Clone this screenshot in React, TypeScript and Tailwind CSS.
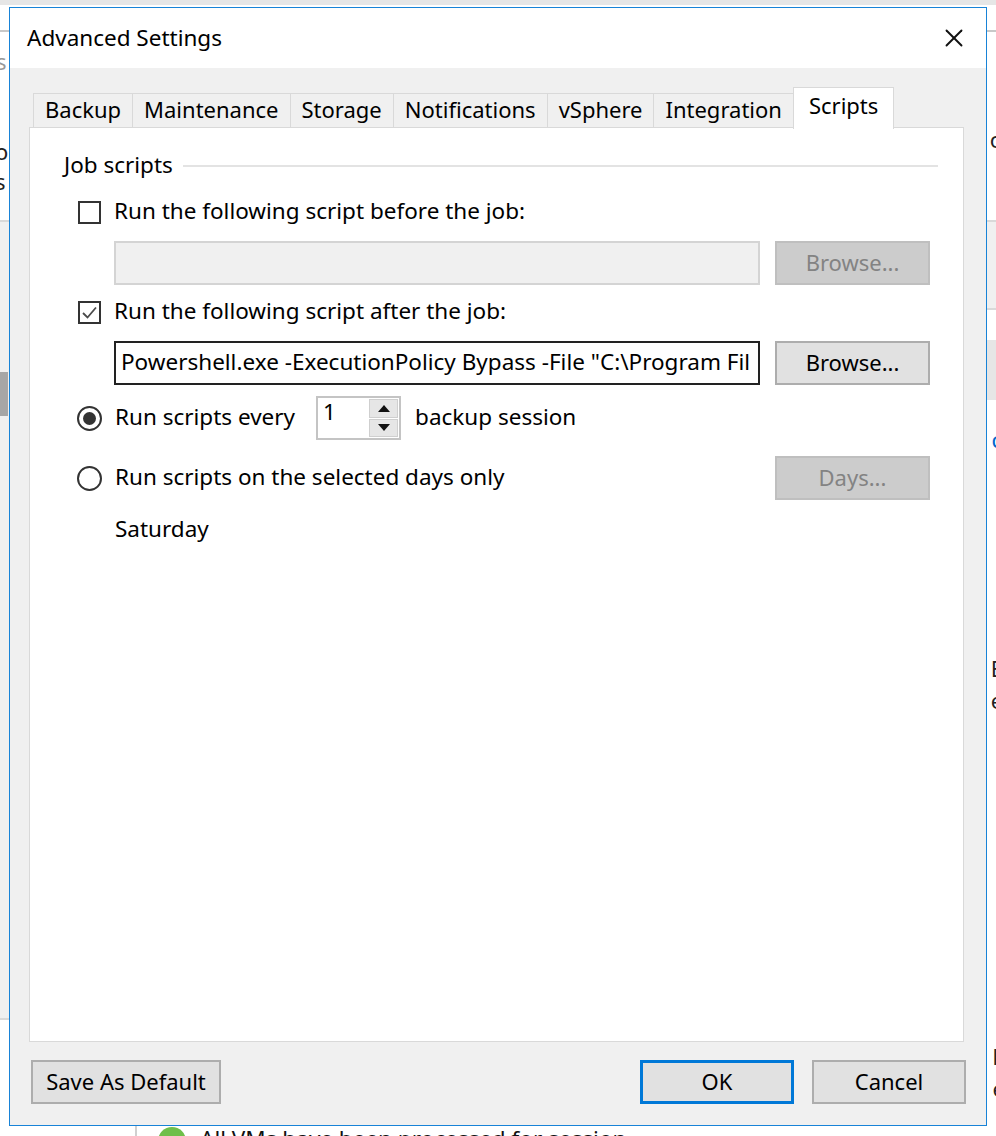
import { X } from "lucide-react";

const font = { fontFamily: '"Noto Sans", "Open Sans", sans-serif' };

const tabs = ["Backup", "Maintenance", "Storage", "Notifications", "vSphere", "Integration"];

function Checkbox({ checked }: { checked?: boolean }) {
  return (
    <div className="w-[23px] h-[23px] border-2 border-[#333333] bg-white flex items-center justify-center shrink-0">
      {checked && (
        <svg width="17" height="17" viewBox="0 0 17 17">
          <path d="M2 9 L6.5 13.5 L15 3.5" fill="none" stroke="#4a4a4a" strokeWidth="1.8" />
        </svg>
      )}
    </div>
  );
}

function Radio({ checked }: { checked?: boolean }) {
  return (
    <div className="w-[25px] h-[25px] rounded-full border-2 border-[#333333] bg-white flex items-center justify-center shrink-0">
      {checked && <div className="w-[13px] h-[13px] rounded-full bg-[#333333]" />}
    </div>
  );
}

function Button({ label, disabled, primary, w = "w-[155px]" }: { label: string; disabled?: boolean; primary?: boolean; w?: string }) {
  return (
    <div
      className={`${w} h-[44px] flex items-center justify-center text-[22px] leading-[28px] pb-[2px] shrink-0 ${
        disabled
          ? "bg-[#cccccc] border-2 border-[#bfbfbf] text-[#838383]"
          : primary
          ? "bg-[#e1e1e1] border-[3px] border-[#0078d7] text-black"
          : "bg-[#e1e1e1] border-2 border-[#adadad] text-black"
      }`}
    >
      {label}
    </div>
  );
}

export default function App() {
  return (
    <div className="relative w-[996px] h-[1136px] overflow-hidden bg-white" style={font}>
      {/* underlying window, mostly hidden */}
      <div className="absolute inset-x-0 top-0 h-[5px] bg-[#e6e6e6]" />
      <div className="absolute left-0 top-[30px] w-[10px] h-[2px] bg-[#c8c8c8]" />
      <div className="absolute right-0 top-[30px] w-[10px] h-[2px] bg-[#c8c8c8]" />
      <div className="absolute left-0 top-[220px] w-[10px] h-[800px] bg-[#f0f0f0] border-t-2 border-[#d9d9d9]" />
      <div className="absolute left-0 top-[372px] w-[8px] h-[44px] bg-[#a6a6a6]" />
      <div className="absolute left-0 top-[1018px] w-[10px] h-[2px] bg-[#d9d9d9]" />
      <div className="absolute right-0 top-[220px] w-[10px] h-[90px] bg-[#f0f0f0] border-y-2 border-[#d9d9d9]" />
      <div className="absolute right-0 top-[340px] w-[10px] h-[60px] bg-[#e6e6e6]" />
      <div className="absolute left-[-5px] top-[136px] text-[22px] leading-[30px] text-[#222]">o<br />s</div>
      <div className="absolute left-[-4px] top-[46px] text-[22px] leading-[30px] text-[#999]">s</div>
      <div className="absolute right-[-7px] top-[124px] text-[22px] leading-[30px] text-[#222]">o</div>
      <div className="absolute right-[-6px] top-[424px] text-[22px] leading-[30px] text-[#0066cc]">c</div>
      <div className="absolute right-[-9px] top-[652px] text-[22px] leading-[32px] text-[#222]">B<br />e</div>
      <div className="absolute right-[-9px] top-[1040px] text-[22px] leading-[32px] text-[#222]">k<br />e</div>
      <div className="absolute left-[135px] top-[1126px] w-[2px] h-[10px] bg-[#d0d0d0]" />
      <div className="absolute left-[158px] top-[1127px] w-[28px] h-[28px] rounded-full bg-[#6fbf4a]" />
      <div className="absolute left-[200px] top-[1125px] text-[22.5px] leading-[28px] text-[#111] whitespace-nowrap">
        All VMs have been processed for session
      </div>

      {/* dialog */}
      <div className="absolute left-[9px] top-[7px] w-[978px] h-[1119px] border border-[#1883d7] bg-[#f0f0f0] flex flex-col">
        <div className="h-[60px] bg-white flex items-center justify-between pl-[17px] pr-[17px] shrink-0">
          <span className="text-[22.5px] text-black">Advanced Settings</span>
          <X size={30} strokeWidth={1.5} color="#111" />
        </div>

        <div className="flex-1 flex flex-col pt-[18px] pl-[19px] pr-[22px] pb-[21px]">
          {/* tabs */}
          <div className="flex items-end h-[41px] pl-[4px] relative z-10">
            {tabs.map((t) => (
              <div
                key={t}
                className="h-[35px] -mb-px px-[11px] pb-[3px] border border-[#d9d9d9] -ml-px first:ml-0 flex items-center text-[22px] text-black bg-[#f0f0f0]"
              >
                {t}
              </div>
            ))}
            <div className="h-[42px] -mb-[2px] -ml-px px-[15px] border border-b-0 border-[#d9d9d9] bg-white flex items-start pt-[1px] text-[22px] text-black">
              Scripts
            </div>
          </div>

          {/* panel */}
          <div className="h-[915px] bg-white border border-[#d9d9d9] pt-[24px] pl-[34px] pr-[25px] flex flex-col text-[22.5px] text-black">
            <div className="flex items-center h-[28px] gap-[10px]">
              <span className="-mt-[2px]">Job scripts</span>
              <div className="flex-1 h-[2px] bg-[#e3e3e3]" />
            </div>

            <div className="flex items-center h-[28px] mt-[18px] pl-[14px] gap-[13px]">
              <Checkbox />
              <span className="-mt-[2px]">Run the following script before the job:</span>
            </div>

            <div className="flex items-center mt-[15px] pl-[50px] gap-[15px] pr-[8px]">
              <div className="flex-1 h-[44px] bg-[#f0f0f0] border-2 border-[#d4d4d4]" />
              <Button label="Browse..." disabled />
            </div>

            <div className="flex items-center h-[28px] mt-[13px] pl-[14px] gap-[13px]">
              <Checkbox checked />
              <span className="-mt-[2px]">Run the following script after the job:</span>
            </div>

            <div className="flex items-center mt-[15px] pl-[50px] gap-[15px] pr-[8px]">
              <div className="flex-1 min-w-0 h-[44px] bg-white border-2 border-[#222222] flex items-center pl-[5px] pb-[2px] overflow-hidden">
                <span className="whitespace-nowrap">Powershell.exe -ExecutionPolicy Bypass -File "C:\Program Fil</span>
              </div>
              <Button label="Browse..." />
            </div>

            <div className="flex items-center h-[44px] mt-[11px] pl-[13px]">
              <Radio checked />
              <span className="ml-[13px] -mt-[2px]">Run scripts every</span>
              <div className="ml-[21px] w-[85px] h-[44px] border-2 border-[#c4c4c4] bg-white flex items-stretch">
                <span className="flex-1 leading-[26px] pl-[5px] pt-[1px]">1</span>
                <div className="w-[30px] flex flex-col gap-[1px] py-[1px] pr-[1px]">
                  <div className="flex-1 bg-[#e6e6e6] border border-[#cfcfcf] flex items-center justify-center">
                    <svg width="12" height="7" viewBox="0 0 12 7"><path d="M6 0 L12 7 L0 7 Z" fill="#111" /></svg>
                  </div>
                  <div className="flex-1 bg-[#e6e6e6] border border-[#cfcfcf] flex items-center justify-center">
                    <svg width="12" height="7" viewBox="0 0 12 7"><path d="M0 0 L12 0 L6 7 Z" fill="#111" /></svg>
                  </div>
                </div>
              </div>
              <span className="ml-[14px] -mt-[2px]">backup session</span>
            </div>

            <div className="flex items-center h-[44px] mt-[16px] pl-[13px] pr-[8px]">
              <Radio />
              <span className="ml-[13px] flex-1 -mt-[2px]">Run scripts on the selected days only</span>
              <Button label="Days..." disabled />
            </div>

            <div className="h-[28px] mt-[16px] pl-[51px] flex items-center">
              <span className="-mt-[2px]">Saturday</span>
            </div>
          </div>

          {/* footer buttons */}
          <div className="flex items-center mt-[18px] pl-[2px] -mr-[2px]">
            <Button label="Save As Default" w="w-[190px]" />
            <div className="flex-1" />
            <Button label="OK" primary w="w-[154px]" />
            <div className="w-[18px]" />
            <Button label="Cancel" w="w-[154px]" />
          </div>
        </div>
      </div>
    </div>
  );
}
